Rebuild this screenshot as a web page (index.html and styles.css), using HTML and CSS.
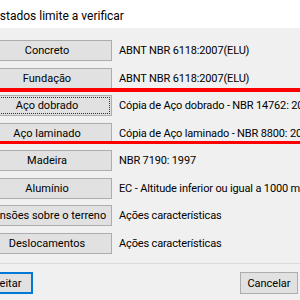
FILE: index.html
```html
<!DOCTYPE html>
<html>
<head>
<meta charset="utf-8">
<link rel="stylesheet" href="styles.css">
</head>
<body>
<div class="dialog">
  <div class="header"><span class="title">Estados limite a verificar</span></div>
  <div class="content">
    <div class="row"><button class="btn">Concreto</button><span class="desc">ABNT NBR 6118:2007(ELU)</span></div>
    <div class="row"><button class="btn">Fundação</button><span class="desc">ABNT NBR 6118:2007(ELU)</span></div>
    <div class="row"><button class="btn focus">Aço dobrado</button><span class="desc">Cópia de Aço dobrado - NBR 14762: 2010</span></div>
    <div class="row"><button class="btn">Aço laminado</button><span class="desc">Cópia de Aço laminado - NBR 8800: 2008</span></div>
    <div class="row"><button class="btn">Madeira</button><span class="desc">NBR 7190: 1997</span></div>
    <div class="row"><button class="btn">Alumínio</button><span class="desc">EC - Altitude inferior ou igual a 1000 m</span></div>
    <div class="row"><button class="btn">Tensões sobre o terreno</button><span class="desc">Ações características</span></div>
    <div class="row"><button class="btn">Deslocamentos</button><span class="desc">Ações características</span></div>
  </div>
  <div class="footer">
    <button class="btn small default">Aceitar</button>
    <button class="btn small">Cancelar</button>
  </div>
</div>
<div class="mark mark-top"></div>
<div class="mark mark-bottom"></div>
</body>
</html>
```

FILE: styles.css
```css
html, body {
  margin: 0;
  padding: 0;
  width: 300px;
  height: 300px;
  overflow: hidden;
  background: #f0f0f0;
  font-family: Roboto, "Liberation Sans", sans-serif;
  color: #000;
}

.dialog {
  width: 330px;
  margin-left: -30px;
  height: 300px;
  display: flex;
  flex-direction: column;
}

.header {
  height: 28px;
  background: #fff;
  box-sizing: border-box;
  padding: 9px 0 0 23px;
  font-size: 12px;
  line-height: 14px;
  white-space: nowrap;
}

.content {
  background: #f0f0f0;
  padding: 12px 0 0 12px;
  height: 235px;
  box-sizing: border-box;
  display: flex;
  flex-direction: column;
  gap: 6.5px;
}

.row {
  display: flex;
  align-items: center;
  gap: 7px;
  white-space: nowrap;
  height: 21px;
}

.btn {
  font-family: Roboto, "Liberation Sans", sans-serif;
  font-size: 11px;
  color: #000;
  background: #e1e1e1;
  border: 1px solid #adadad;
  margin: 0;
  padding: 0;
  height: 21px;
  width: 130px;
  flex: none;
  white-space: nowrap;
  overflow: hidden;
  line-height: 19px;
}

.btn.focus {
  outline: 1px dotted #333;
  outline-offset: -3px;
}

.desc {
  font-size: 11px;
  line-height: 13px;
  letter-spacing: -0.15px;
}

.footer {
  flex: 1;
  border-top: 1px solid #dadada;
  display: flex;
  justify-content: space-between;
  align-items: flex-start;
  padding: 8px 2px 0 5px;
}

.btn.small {
  width: 58px;
  height: 22px;
}

.btn.default {
  border: 1px solid #0078d7;
  box-shadow: inset 0 0 0 1px #0078d7;
}

.mark {
  position: absolute;
  left: 0;
  width: 300px;
  background: #ff0000;
}

.mark-top {
  top: 88px;
  height: 4px;
}

.mark-bottom {
  top: 141px;
  height: 3px;
}
```
